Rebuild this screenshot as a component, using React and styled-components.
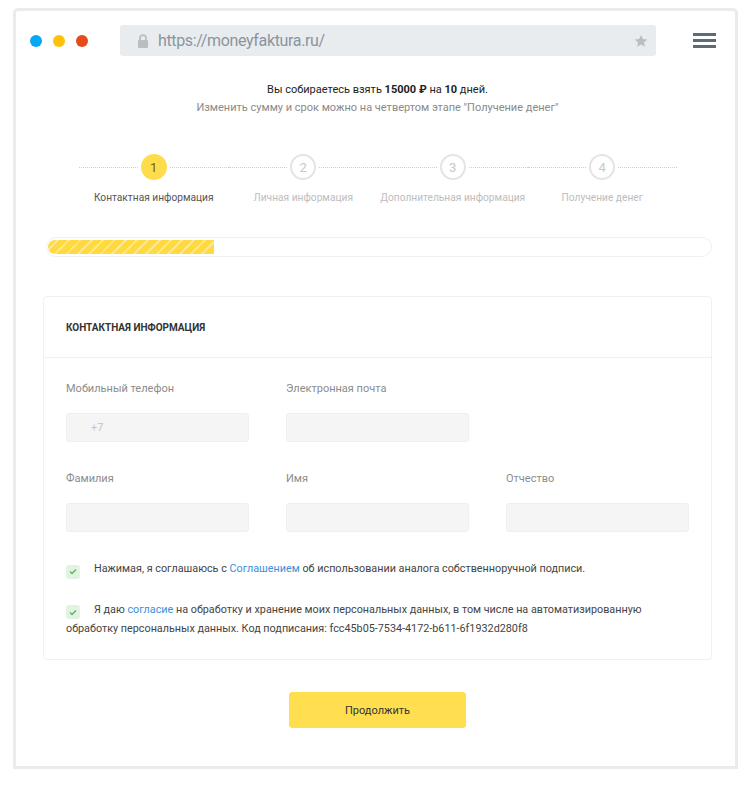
import React from "react";
import styled, { createGlobalStyle } from "styled-components";

const GlobalStyle = createGlobalStyle`
  html, body {
    margin: 0;
    padding: 0;
    background: #fff;
  }
  body {
    font-family: Roboto, "Liberation Sans", Arial, sans-serif;
    font-size: 11px;
    color: #333;
  }
  * {
    box-sizing: border-box;
  }
`;

const Page = styled.div`
  width: 751px;
  padding: 8px 13px 18px;
`;

const Frame = styled.div`
  height: 761px;
  border: 3px solid #e9ecef;
  border-radius: 5px 5px 0 0;
  display: flex;
  flex-direction: column;
`;

const TopBar = styled.div`
  display: flex;
  align-items: center;
  padding: 14px 19px 0 14px;
`;

const Dots = styled.div`
  display: flex;
  gap: 11px;
  margin-right: 32px;
`;

const Dot = styled.span`
  width: 12px;
  height: 12px;
  border-radius: 50%;
  background: ${(p) => p.color};
`;

const UrlBar = styled.div`
  width: 536px;
  height: 31px;
  background: #e9ecef;
  border-radius: 3px;
  display: flex;
  align-items: center;
  padding: 0 8px 0 17px;
  color: #8a959e;
  font-size: 16px;
  letter-spacing: -0.35px;
`;

const UrlText = styled.span`
  flex: 1;
  margin-left: 9px;
`;

const Burger = styled.div`
  margin-left: auto;
  width: 23px;
  display: flex;
  flex-direction: column;
  gap: 3.5px;

  span {
    height: 2.5px;
    background: #5d6b76;
  }
`;

const Content = styled.div`
  padding: 0 23px 0 27px;
  display: flex;
  flex-direction: column;
`;

const Intro = styled.div`
  margin-top: 25px;
  text-align: center;
  line-height: 18px;
  color: #222;

  b {
    font-weight: 700;
  }
`;

const IntroNote = styled.div`
  color: #8a8a8a;
`;

const Steps = styled.div`
  margin-top: 37px;
  display: grid;
  grid-template-columns: repeat(4, 149.5px);
  justify-content: center;
  padding-left: 1px;
`;

const Step = styled.div`
  display: flex;
  flex-direction: column;
  align-items: center;
`;

const StepTrack = styled.div`
  width: 100%;
  display: flex;
  align-items: center;
  gap: 3px;
`;

const Dotted = styled.span`
  flex: 1;
  height: 0;
  border-top: 1px dotted #cfcfcf;
`;

const Circle = styled.span`
  width: 26px;
  height: 26px;
  border-radius: 50%;
  display: flex;
  align-items: center;
  justify-content: center;
  font-size: 13px;
  background: ${(p) => (p.$active ? "#ffdc4a" : "#fff")};
  border: 2px solid ${(p) => (p.$active ? "#ffdc4a" : "#e4e4e4")};
  color: ${(p) => (p.$active ? "#6e5e22" : "#c8c8c8")};
`;

const StepLabel = styled.div`
  margin-top: 10px;
  line-height: 16px;
  font-size: 10.2px;
  white-space: nowrap;
  color: ${(p) => (p.$active ? "#555" : "#bdbdbd")};
`;

const Progress = styled.div`
  margin: 31px 0 0 3px;
  height: 20px;
  border: 1px solid #eef0f3;
  border-radius: 10px;
  padding: 2px 1px;
`;

const ProgressFill = styled.div`
  height: 14px;
  border-radius: 7px 0 0 7px;
  background: repeating-linear-gradient(
    135deg,
    #ffd93f 0px,
    #ffd93f 6px,
    #ffe88a 6px,
    #ffe88a 8px
  );
`;

const Card = styled.div`
  margin-top: 39px;
  border: 1px solid #eef0f3;
  border-radius: 4px;
`;

const CardHeader = styled.div`
  height: 61px;
  display: flex;
  align-items: center;
  padding: 0 22px;
  border-bottom: 1px solid #eef0f3;
  font-size: 10px;
  font-weight: 700;
  color: #333;
`;

const CardBody = styled.div`
  padding: 23px 22px 21px;
`;

const FieldRow = styled.div`
  display: grid;
  grid-template-columns: repeat(3, 183px);
  column-gap: 37px;
  margin-bottom: ${(p) => p.$gap || 0}px;
`;

const Field = styled.div`
  display: flex;
  flex-direction: column;
`;

const Label = styled.div`
  line-height: 16px;
  color: #8c8c8c;
  margin-bottom: 16px;
`;

const Input = styled.div`
  height: 29px;
  background: #f5f5f5;
  border: 1px solid #efefef;
  border-radius: 3px;
  padding: 0 24px;
  display: flex;
  align-items: center;
  color: #c4c4c4;
`;

const Agree = styled.p`
  margin: ${(p) => p.$top}px 0 0;
  line-height: 19px;
  font-size: 10.8px;
  color: #444;

  a {
    color: #3b8fd9;
    text-decoration: none;
  }
`;

const Check = styled.span`
  display: inline-flex;
  align-items: center;
  justify-content: center;
  width: 14px;
  height: 14px;
  border-radius: 3px;
  background: #e2f3e2;
  vertical-align: -3px;
  margin-right: 14px;
`;

const Button = styled.button`
  margin: 32px auto 0;
  width: 177px;
  height: 36px;
  border: 1px solid #fde04a;
  border-radius: 3px;
  background: #ffdf4f;
  font-family: inherit;
  font-size: 11px;
  color: #333;
`;

const LockIcon = () => (
  <svg width="12" height="14" viewBox="0 0 12 14">
    <path
      d="M3 6V4.2a3 3 0 0 1 6 0V6"
      fill="none"
      stroke="#b8bec4"
      strokeWidth="1.8"
    />
    <rect x="1" y="6" width="10" height="8" rx="1" fill="#b8bec4" />
  </svg>
);

const StarIcon = () => (
  <svg width="14" height="14" viewBox="0 0 24 24">
    <path
      d="M12 1.5l3.2 7 7.6.8-5.7 5.1 1.6 7.5L12 18l-6.7 3.9 1.6-7.5L1.2 9.3l7.6-.8z"
      fill="#b8bec4"
    />
  </svg>
);

const CheckMark = () => (
  <svg width="8" height="7" viewBox="0 0 8 7">
    <path d="M1 3.6l2 2 4-4.2" fill="none" stroke="#5cba5c" strokeWidth="1.4" />
  </svg>
);

const steps = [
  "Контактная информация",
  "Личная информация",
  "Дополнительная информация",
  "Получение денег",
];

export default function App() {
  return (
    <>
      <GlobalStyle />
      <Page>
        <Frame>
          <TopBar>
            <Dots>
              <Dot color="#03a9f4" />
              <Dot color="#ffc107" />
              <Dot color="#e64a19" />
            </Dots>
            <UrlBar>
              <LockIcon />
              <UrlText>https://moneyfaktura.ru/</UrlText>
              <StarIcon />
            </UrlBar>
            <Burger>
              <span />
              <span />
              <span />
            </Burger>
          </TopBar>

          <Content>
            <Intro>
              <div>
                Вы собираетесь взять <b>15000 ₽</b> на <b>10</b> дней.
              </div>
              <IntroNote>
                Изменить сумму и срок можно на четвертом этапе "Получение денег"
              </IntroNote>
            </Intro>

            <Steps>
              {steps.map((name, i) => (
                <Step key={name}>
                  <StepTrack>
                    <Dotted />
                    <Circle $active={i === 0}>{i + 1}</Circle>
                    <Dotted />
                  </StepTrack>
                  <StepLabel $active={i === 0}>{name}</StepLabel>
                </Step>
              ))}
            </Steps>

            <Progress>
              <ProgressFill style={{ width: "25%" }} />
            </Progress>

            <Card>
              <CardHeader>КОНТАКТНАЯ ИНФОРМАЦИЯ</CardHeader>
              <CardBody>
                <FieldRow $gap={29}>
                  <Field>
                    <Label>Мобильный телефон</Label>
                    <Input>+7</Input>
                  </Field>
                  <Field>
                    <Label>Электронная почта</Label>
                    <Input />
                  </Field>
                </FieldRow>
                <FieldRow>
                  <Field>
                    <Label>Фамилия</Label>
                    <Input />
                  </Field>
                  <Field>
                    <Label>Имя</Label>
                    <Input />
                  </Field>
                  <Field>
                    <Label>Отчество</Label>
                    <Input />
                  </Field>
                </FieldRow>

                <Agree $top={27}>
                  <Check>
                    <CheckMark />
                  </Check>
                  <span>
                    Нажимая, я соглашаюсь с <a href="#">Соглашением</a> об
                    использовании аналога собственноручной подписи.
                  </span>
                </Agree>
                <Agree $top={21}>
                  <Check>
                    <CheckMark />
                  </Check>
                  <span>
                    Я даю <a href="#">согласие</a> на обработку и хранение
                    моих персональных данных, в том числе на автоматизированную
                    обработку персональных данных. Код подписания:
                    fcc45b05-7534-4172-b611-6f1932d280f8
                  </span>
                </Agree>
              </CardBody>
            </Card>

            <Button>Продолжить</Button>
          </Content>
        </Frame>
      </Page>
    </>
  );
}
